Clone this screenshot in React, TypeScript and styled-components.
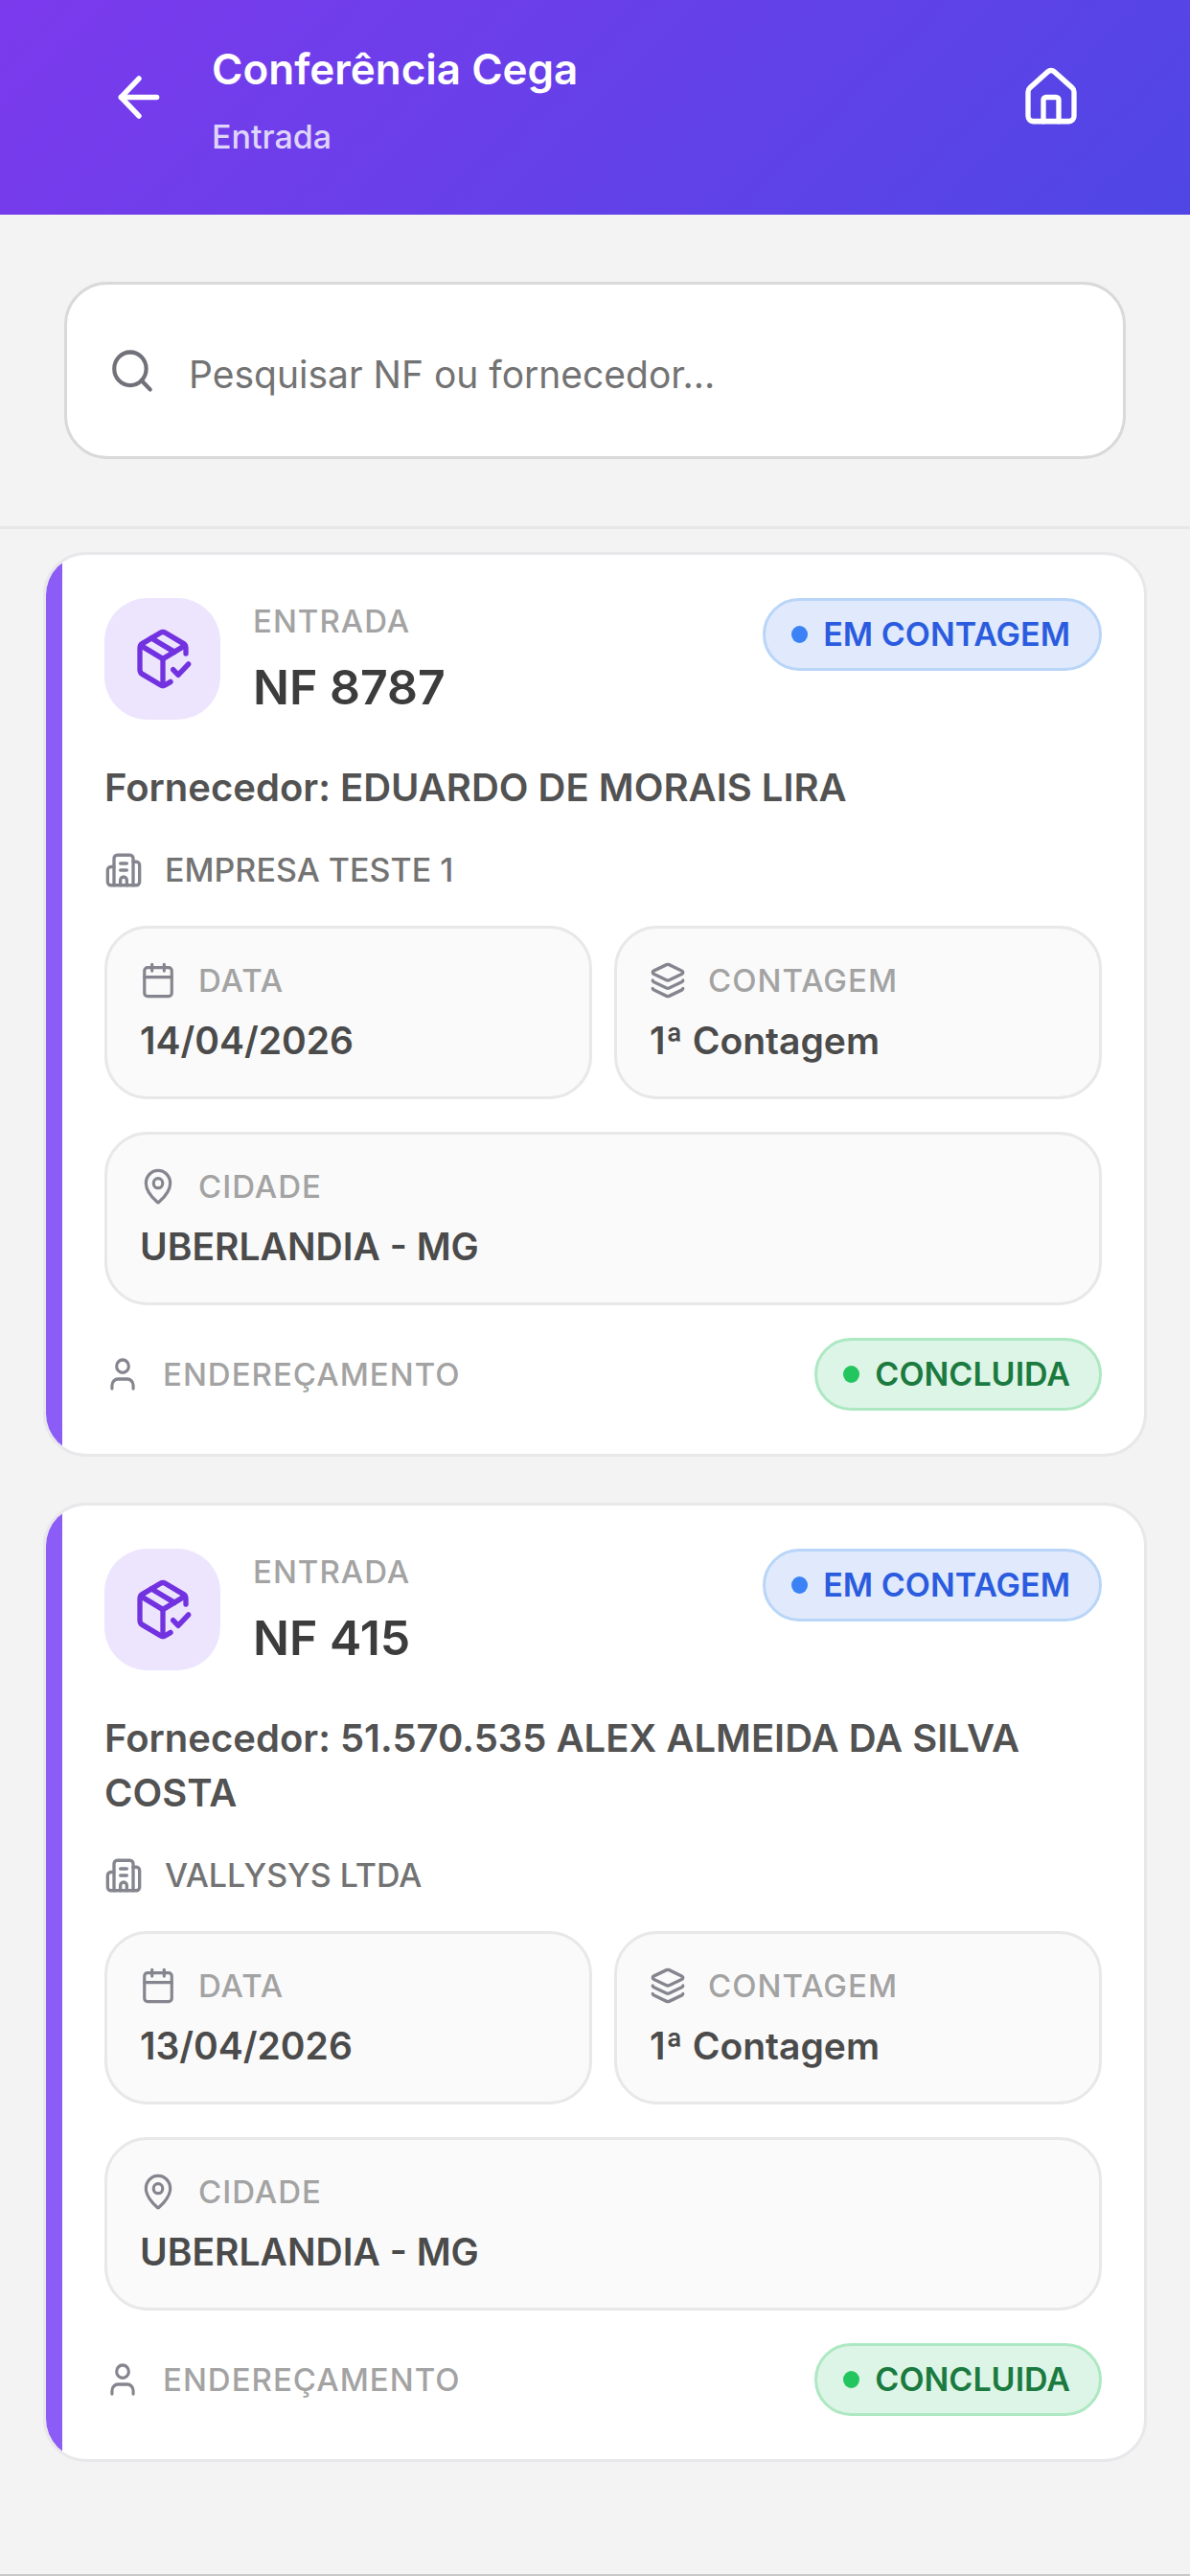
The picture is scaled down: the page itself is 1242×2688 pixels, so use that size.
import React from "react";
import styled, { createGlobalStyle, css } from "styled-components";
import {
  ArrowLeft,
  Building2,
  Calendar,
  House,
  Layers,
  MapPin,
  PackageCheck,
  Search,
  User,
} from "lucide-react";

const GlobalStyle = createGlobalStyle`
  *, *::before, *::after { box-sizing: border-box; }
  body {
    margin: 0;
    background: #f3f3f4;
    font-family: Inter, "Liberation Sans", sans-serif;
    -webkit-font-smoothing: antialiased;
  }
  h1, h2, p, dl, dt, dd, ul { margin: 0; padding: 0; }
`;

const Page = styled.div`
  min-height: 100vh;
  display: flex;
  flex-direction: column;
  border-bottom: 2px solid #c8c8c8;
`;

const Header = styled.header`
  display: flex;
  align-items: flex-start;
  gap: 18px;
  padding: 43px 87px 57px;
  background: linear-gradient(135deg, #7c3aed 0%, #4f46e5 100%);
  color: #ffffff;
`;

const IconButton = styled.button`
  display: flex;
  align-items: center;
  justify-content: center;
  width: 116px;
  height: 116px;
  padding: 0;
  border: 0;
  border-radius: 42px;
  background: transparent;
  color: inherit;
`;

const Heading = styled.div`
  flex: 1;
  display: flex;
  flex-direction: column;
  gap: 18px;
`;

const Title = styled.h1`
  font-size: 44px;
  line-height: 58px;
  font-weight: 600;
`;

const Subtitle = styled.p`
  font-size: 34px;
  line-height: 48px;
  font-weight: 500;
  color: rgba(255, 255, 255, 0.8);
`;

const SearchBar = styled.form`
  padding: 70px 67px;
  border-bottom: 3px solid #e7e7e8;
`;

const SearchField = styled.label`
  display: flex;
  align-items: center;
  gap: 34px;
  height: 185px;
  padding: 0 43px;
  border: 3px solid #d9d9d9;
  border-radius: 45px;
  background: #ffffff;
  color: #71717a;
`;

const SearchInput = styled.input`
  flex: 1;
  min-width: 0;
  padding: 8px 0 0;
  border: 0;
  outline: 0;
  background: transparent;
  font: inherit;
  font-size: 39px;
  line-height: 57px;
  color: #404040;
  &::placeholder {
    color: #737373;
    opacity: 1;
  }
`;

const List = styled.ul`
  display: flex;
  flex-direction: column;
  gap: 48px;
  padding: 24px 45px 48px;
  list-style: none;
`;

const Card = styled.li`
  position: relative;
  overflow: hidden;
  display: flex;
  flex-direction: column;
  gap: 34px;
  padding: 45px 44px 45px 61px;
  border: 3px solid #e8e8eb;
  border-radius: 45px;
  background: #ffffff;
  &::before {
    content: "";
    position: absolute;
    inset: 0 auto 0 0;
    width: 17px;
    background: #8b5cf6;
  }
`;

const CardHeader = styled.div`
  display: flex;
  align-items: flex-start;
  gap: 34px;
  margin-bottom: 8px;
`;

const Tile = styled.div`
  display: flex;
  align-items: center;
  justify-content: center;
  width: 121px;
  height: 127px;
  border-radius: 45px;
  background: #ede5fe;
  color: #7232e0;
`;

const CardTitles = styled.div`
  flex: 1;
  display: flex;
  flex-direction: column;
  gap: 12px;
`;

const labelText = css`
  font-size: 33px;
  line-height: 48px;
  font-weight: 500;
  letter-spacing: 1px;
  text-transform: uppercase;
  color: #a3a3a3;
`;

const Label = styled.p`
  ${labelText}
`;

const ReceiptNumber = styled.h2`
  font-size: 50px;
  line-height: 66px;
  font-weight: 600;
  color: #3c3c3c;
`;

const tones = {
  blue: { bg: "#e0eafc", border: "#b9d5f8", text: "#2b5cdf", dot: "#3b82f6" },
  green: { bg: "#ddf5e6", border: "#ade8c3", text: "#1b7a40", dot: "#22c55e" },
};

type Tone = keyof typeof tones;

const Pill = styled.span<{ $tone: Tone }>`
  display: inline-flex;
  align-items: center;
  gap: 16px;
  height: 76px;
  padding: 0 30px 0 27px;
  border: 3px solid ${({ $tone }) => tones[$tone].border};
  border-radius: 38px;
  background: ${({ $tone }) => tones[$tone].bg};
  color: ${({ $tone }) => tones[$tone].text};
  font-size: 34px;
  line-height: 48px;
  font-weight: 600;
  white-space: nowrap;
  &::before {
    content: "";
    width: 17px;
    height: 18px;
    border-radius: 50%;
    background: ${({ $tone }) => tones[$tone].dot};
  }
`;

const Supplier = styled.p`
  font-size: 40px;
  line-height: 57px;
  font-weight: 600;
  color: #525252;
`;

const Company = styled.p`
  display: flex;
  align-items: center;
  gap: 23px;
  font-size: 34px;
  line-height: 48px;
  font-weight: 500;
  color: #737373;
`;

const Fields = styled.dl`
  display: grid;
  grid-template-columns: 1fr 1fr;
  gap: 34px 23px;
`;

const FieldBox = styled.div<{ $wide?: boolean }>`
  display: flex;
  flex-direction: column;
  gap: 10px;
  grid-column: ${({ $wide }) => ($wide ? "1 / -1" : "auto")};
  padding: 30px 34px;
  border: 3px solid #e8e8e8;
  border-radius: 45px;
  background: #fafafa;
`;

const FieldLabel = styled.dt`
  ${labelText}
  display: flex;
  align-items: center;
  gap: 23px;
`;

const FieldValue = styled.dd`
  font-size: 39px;
  line-height: 57px;
  font-weight: 600;
  color: #4b4b4b;
`;

const CardFooter = styled.div`
  display: flex;
  align-items: center;
  justify-content: space-between;
`;

const FooterLabel = styled.p`
  ${labelText}
  display: flex;
  align-items: center;
  gap: 23px;
`;

const smallIcon = {
  width: 38,
  height: 40,
  strokeWidth: 2,
  color: "#85858f",
  preserveAspectRatio: "none",
};
const largeIcon = { width: 64, height: 67, strokeWidth: 2, preserveAspectRatio: "none" };

type Receipt = {
  number: string;
  supplier: string;
  company: string;
  date: string;
  count: string;
  city: string;
};

const receipts: Receipt[] = [
  {
    number: "8787",
    supplier: "EDUARDO DE MORAIS LIRA",
    company: "EMPRESA TESTE 1",
    date: "14/04/2026",
    count: "1ª Contagem",
    city: "UBERLANDIA - MG",
  },
  {
    number: "415",
    supplier: "51.570.535 ALEX ALMEIDA DA SILVA COSTA",
    company: "VALLYSYS LTDA",
    date: "13/04/2026",
    count: "1ª Contagem",
    city: "UBERLANDIA - MG",
  },
];

type FieldProps = {
  icon: React.ReactNode;
  label: string;
  value: string;
  wide?: boolean;
};

function Field({ icon, label, value, wide }: FieldProps) {
  return (
    <FieldBox $wide={wide}>
      <FieldLabel>
        {icon}
        {label}
      </FieldLabel>
      <FieldValue>{value}</FieldValue>
    </FieldBox>
  );
}

function ReceiptCard({ receipt }: { receipt: Receipt }) {
  return (
    <Card>
      <CardHeader>
        <Tile>
          <PackageCheck {...largeIcon} />
        </Tile>
        <CardTitles>
          <Label>Entrada</Label>
          <ReceiptNumber>{`NF ${receipt.number}`}</ReceiptNumber>
        </CardTitles>
        <Pill $tone="blue">EM CONTAGEM</Pill>
      </CardHeader>
      <Supplier>{`Fornecedor: ${receipt.supplier}`}</Supplier>
      <Company>
        <Building2 {...smallIcon} width={40} height={42} />
        {receipt.company}
      </Company>
      <Fields>
        <Field icon={<Calendar {...smallIcon} />} label="Data" value={receipt.date} />
        <Field icon={<Layers {...smallIcon} />} label="Contagem" value={receipt.count} />
        <Field icon={<MapPin {...smallIcon} />} label="Cidade" value={receipt.city} wide />
      </Fields>
      <CardFooter>
        <FooterLabel>
          <User {...smallIcon} />
          Endereçamento
        </FooterLabel>
        <Pill $tone="green">CONCLUIDA</Pill>
      </CardFooter>
    </Card>
  );
}

export default function App() {
  return (
    <>
      <GlobalStyle />
      <Page>
        <Header>
          <IconButton type="button" aria-label="Voltar">
            <ArrowLeft {...largeIcon} />
          </IconButton>
          <Heading>
            <Title>Conferência Cega</Title>
            <Subtitle>Entrada</Subtitle>
          </Heading>
          <IconButton type="button" aria-label="Início">
            <House {...largeIcon} />
          </IconButton>
        </Header>
        <SearchBar role="search">
          <SearchField>
            <Search width={50} height={52} strokeWidth={2} preserveAspectRatio="none" />
            <SearchInput
              type="text"
              aria-label="Pesquisar"
              placeholder="Pesquisar NF ou fornecedor..."
            />
          </SearchField>
        </SearchBar>
        <List>
          {receipts.map((receipt) => (
            <ReceiptCard key={receipt.number} receipt={receipt} />
          ))}
        </List>
      </Page>
    </>
  );
}
